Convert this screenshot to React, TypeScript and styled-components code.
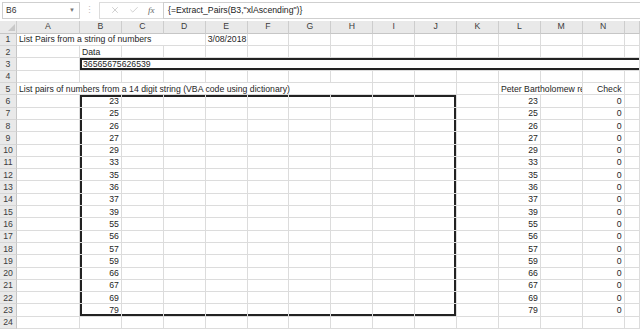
import React from "react";
import styled, {createGlobalStyle} from "styled-components";
import {X, Check} from "lucide-react";

const GlobalStyle = createGlobalStyle`
  html, body {
    margin: 0;
    padding: 0;
    background: #ffffff;
    overflow: hidden;
  }
  body {
    font-family: "Liberation Sans", Arial, sans-serif;
  }
`;

const COLS = ["A", "B", "C", "D", "E", "F", "G", "H", "I", "J", "K", "L", "M", "N"];
const PAIRS = [23, 25, 26, 27, 29, 33, 35, 36, 37, 39, 55, 56, 57, 59, 66, 67, 69, 79];

const Window = styled.div`
  width: 640px;
  height: 329px;
  display: flex;
  flex-direction: column;
  overflow: hidden;
  background: #ffffff;
`;

const FormulaBar = styled.div`
  height: 23px;
  display: flex;
  align-items: center;
  padding: 0 0 0 2px;
  background: #ffffff;
  border-bottom: 1px solid #e2e2e2;
  box-sizing: border-box;
`;

const NameBox = styled.div`
  width: 78px;
  height: 17px;
  box-sizing: border-box;
  border: 1px solid #cfcfcf;
  display: flex;
  align-items: center;
  justify-content: space-between;
  padding: 0 4px 0 3px;
  font-size: 8.5px;
  color: #333;
`;

const Caret = styled.span`
  font-size: 6px;
  color: #777;
`;

const Grip = styled.div`
  width: 19px;
  text-align: center;
  color: #c0c0c0;
  font-size: 9px;
  line-height: 1;
`;

const IconBox = styled.div`
  width: 64px;
  height: 17px;
  box-sizing: border-box;
  border: 1px solid #dcdcdc;
  border-right: none;
  display: flex;
  align-items: center;
  justify-content: space-around;
  padding: 0 4px 0 6px;
  color: #b4b4b4;
`;

const Fx = styled.span`
  font-family: "Liberation Serif", serif;
  font-style: italic;
  font-size: 9px;
  color: #666;
`;

const FormulaInput = styled.div`
  flex: 1;
  height: 17px;
  box-sizing: border-box;
  border: 1px solid #cfcfcf;
  border-right: none;
  display: flex;
  align-items: center;
  padding-left: 4px;
  font-size: 8.7px;
  color: #222;
`;

const Sheet = styled.div`
  display: grid;
  grid-template-columns: 17px 63px repeat(13, 41.9px) 1fr;
  grid-template-rows: 13px repeat(24, 12.3px);
  font-size: 8.7px;
  color: #1e1e1e;
  margin-top: -1px;
`;

const Header = styled.div`
  background: #e9e9e9;
  border-right: 1px solid #cdcdcd;
  border-bottom: 1px solid #c6c6c6;
  box-sizing: border-box;
  display: flex;
  align-items: flex-end;
  justify-content: center;
  padding-bottom: 2px;
  color: #3c3c3c;
  font-size: 8.7px;
  line-height: 1;
  overflow: hidden;
`;

const CornerMark = styled.span`
  width: 0;
  height: 0;
  border-left: 7px solid transparent;
  border-bottom: 7px solid #c8c8c8;
  margin: 0 1px 0 auto;
`;

const RowHead = styled.div`
  background: #e9e9e9;
  border-right: 1px solid #c6c6c6;
  border-bottom: 1px solid #d6d6d6;
  box-sizing: border-box;
  display: flex;
  align-items: flex-end;
  justify-content: center;
  padding-bottom: 1px;
  color: #3c3c3c;
  font-size: 8.7px;
  line-height: 1;
`;

type Edge = { t?: boolean; l?: boolean; r?: boolean; b?: boolean };

const edgeShadow = (e: Edge) => {
  const parts: string[] = [];
  if (e.t) parts.push("inset 0 2px 0 #222");
  if (e.b) parts.push("inset 0 -2px 0 #222");
  if (e.l) parts.push("inset 2px 0 0 #222");
  if (e.r) parts.push("inset -2px 0 0 #222");
  return parts.length ? parts.join(", ") : "none";
};

const Cell = styled.div<{ $span?: number; $align?: "left" | "right"; $edge: Edge; $clip?: boolean }>`
  grid-column: span ${(p) => p.$span || 1};
  border-right: 1px solid #dcdcdc;
  border-bottom: 1px solid #dcdcdc;
  box-sizing: border-box;
  display: flex;
  align-items: flex-end;
  justify-content: ${(p) => (p.$align === "right" ? "flex-end" : "flex-start")};
  padding: 0 2px 1px ${(p) => (p.$edge.l ? "3px" : "2px")};
  white-space: nowrap;
  overflow: ${(p) => (p.$clip ? "hidden" : "visible")};
  box-shadow: ${(p) => edgeShadow(p.$edge)};
  line-height: 1;
`;

type CellDef = { text?: string | number; span?: number; align?: "left" | "right"; edge?: Edge; clip?: boolean };

// one row of cells filling A..N plus the cut-off column after N
const buildRow = (r: number): CellDef[] => {
  const row: CellDef[] = [];
  if (r === 1) {
    row.push({text: "List Pairs from a string of numbers", span: 4});
    row.push({text: "3/08/2018"});
    for (let i = 0; i < 10; i++) row.push({});
    return row;
  }
  if (r === 2) {
    row.push({});
    row.push({text: "Data"});
    for (let i = 0; i < 13; i++) row.push({});
    return row;
  }
  if (r === 3) {
    row.push({});
    row.push({text: "36565675626539", span: 14, edge: {t: true, l: true, b: true}});
    return row;
  }
  if (r === 5) {
    row.push({text: "List pairs  of numbers from a 14 digit string (VBA code using dictionary)", span: 8});
    row.push({}, {}, {});
    row.push({text: "Peter Bartholomew result", span: 2, clip: true});
    row.push({text: "Check", align: "right"});
    row.push({});
    return row;
  }
  if (r >= 6 && r <= 23) {
    const v = PAIRS[r - 6];
    row.push({});
    for (let c = 1; c <= 9; c++) {
      const edge: Edge = {t: r === 6, b: r === 23, l: c === 1, r: c === 9};
      row.push(c === 1 ? {text: v, align: "right", edge} : {edge});
    }
    row.push({});
    row.push({text: v, align: "right"});
    row.push({});
    row.push({text: 0, align: "right"});
    row.push({});
    return row;
  }
  for (let i = 0; i < 15; i++) row.push({});
  return row;
};

const ROWS = Array.from({length: 24}, (_, i) => i + 1);

export default function App() {
  return (
    <Window>
      <GlobalStyle/>
      <FormulaBar>
        <NameBox>
          <span>B6</span>
          <Caret>▼</Caret>
        </NameBox>
        <Grip>⋮</Grip>
        <IconBox>
          <X size={10} strokeWidth={1.5}/>
          <Check size={10} strokeWidth={1.5}/>
          <Fx>fx</Fx>
        </IconBox>
        <FormulaInput>{'{=Extract_Pairs(B3,"xlAscending")}'}</FormulaInput>
      </FormulaBar>
      <Sheet>
        <Header><CornerMark/></Header>
        {COLS.map((c) => (
          <Header key={c}>{c}</Header>
        ))}
        <Header/>
        {ROWS.map((r) => (
          <React.Fragment key={r}>
            <RowHead>{r}</RowHead>
            {buildRow(r).map((cell, i) => (
              <Cell key={i} $span={cell.span} $align={cell.align} $edge={cell.edge || {}} $clip={cell.clip}>
                {cell.text}
              </Cell>
            ))}
          </React.Fragment>
        ))}
      </Sheet>
    </Window>
  );
}
